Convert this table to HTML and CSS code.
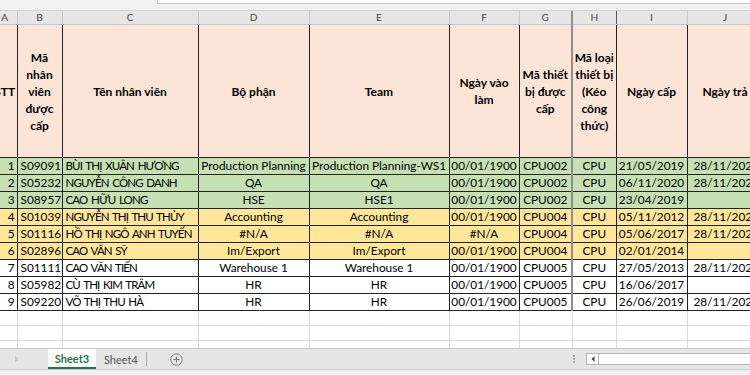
FILE: index.html
```html
<!DOCTYPE html>
<html lang="vi">
<head>
<meta charset="utf-8">
<title>Sheet3</title>
<link rel="stylesheet" href="styles.css">
</head>
<body>
<div class="app">
  <div class="topbar">
    <div class="namebox"></div>
    <div class="fxbox"></div>
  </div>
  <div class="gridwrap">
    <table class="sheet">
      <colgroup>
        <col class="w-a"><col class="w-b"><col class="w-c"><col class="w-d"><col class="w-e">
        <col class="w-f"><col class="w-g"><col class="w-h"><col class="w-i"><col class="w-j">
      </colgroup>
      <thead>
        <tr class="letters">
          <td>A</td><td>B</td><td>C</td><td>D</td><td>E</td><td>F</td><td class="cg">G</td><td class="ch">H</td><td>I</td><td>J</td>
        </tr>
        <tr class="head">
          <th class="c-a">STT</th>
          <th>Mã<br>nhân<br>viên<br>được<br>cấp</th>
          <th>Tên nhân viên</th>
          <th>Bộ phận</th>
          <th>Team</th>
          <th>Ngày vào<br>làm</th>
          <th class="cg">Mã thiết<br>bị được<br>cấp</th>
          <th>Mã loại<br>thiết bị<br>(Kéo<br>công<br>thức)</th>
          <th>Ngày cấp</th>
          <th>Ngày trả</th>
        </tr>
      </thead>
      <tbody>
        <tr class="data green"><td class="r">1</td><td>S09091</td><td class="nm">BÙI THỊ XUÂN HƯƠNG</td><td class="c">Production Planning</td><td class="c">Production Planning-WS1</td><td class="c">00/01/1900</td><td class="c cg">CPU002</td><td class="c">CPU</td><td class="c">21/05/2019</td><td class="j">28/11/2020</td></tr>
        <tr class="data green"><td class="r">2</td><td>S05232</td><td class="nm">NGUYỄN CÔNG DANH</td><td class="c">QA</td><td class="c">QA</td><td class="c">00/01/1900</td><td class="c cg">CPU002</td><td class="c">CPU</td><td class="c">06/11/2020</td><td class="j">28/11/2020</td></tr>
        <tr class="data green"><td class="r">3</td><td>S08957</td><td class="nm">CAO HỮU LONG</td><td class="c">HSE</td><td class="c">HSE1</td><td class="c">00/01/1900</td><td class="c cg">CPU002</td><td class="c">CPU</td><td class="c">23/04/2019</td><td class="j"></td></tr>
        <tr class="data yellow"><td class="r">4</td><td>S01039</td><td class="nm">NGUYỄN THỊ THU THỦY</td><td class="c">Accounting</td><td class="c">Accounting</td><td class="c">00/01/1900</td><td class="c cg">CPU004</td><td class="c">CPU</td><td class="c">05/11/2012</td><td class="j">28/11/2020</td></tr>
        <tr class="data yellow"><td class="r">5</td><td>S01116</td><td class="nm">HỒ THỊ NGÔ ANH TUYẾN</td><td class="c">#N/A</td><td class="c">#N/A</td><td class="c">#N/A</td><td class="c cg">CPU004</td><td class="c">CPU</td><td class="c">05/06/2017</td><td class="j">28/11/2020</td></tr>
        <tr class="data yellow"><td class="r">6</td><td>S02896</td><td class="nm">CAO VĂN SỸ</td><td class="c">Im/Export</td><td class="c">Im/Export</td><td class="c">00/01/1900</td><td class="c cg">CPU004</td><td class="c">CPU</td><td class="c">02/01/2014</td><td class="j"></td></tr>
        <tr class="data"><td class="r">7</td><td>S01111</td><td class="nm">CAO VĂN TIẾN</td><td class="c">Warehouse 1</td><td class="c">Warehouse 1</td><td class="c">00/01/1900</td><td class="c cg">CPU005</td><td class="c">CPU</td><td class="c">27/05/2013</td><td class="j">28/11/2020</td></tr>
        <tr class="data"><td class="r">8</td><td>S05982</td><td class="nm">CÙ THỊ KIM TRÂM</td><td class="c">HR</td><td class="c">HR</td><td class="c">00/01/1900</td><td class="c cg">CPU005</td><td class="c">CPU</td><td class="c">16/06/2017</td><td class="j"></td></tr>
        <tr class="data"><td class="r">9</td><td>S09220</td><td class="nm">VÕ THỊ THU HÀ</td><td class="c">HR</td><td class="c">HR</td><td class="c">00/01/1900</td><td class="c cg">CPU005</td><td class="c">CPU</td><td class="c">26/06/2019</td><td class="j">28/11/2020</td></tr>
        <tr class="empty"><td></td><td></td><td></td><td></td><td></td><td></td><td></td><td></td><td></td><td></td></tr>
        <tr class="empty"><td></td><td></td><td></td><td></td><td></td><td></td><td></td><td></td><td></td><td></td></tr>
        <tr class="empty"><td></td><td></td><td></td><td></td><td></td><td></td><td></td><td></td><td></td><td></td></tr>
      </tbody>
    </table>
  </div>
  <div class="tabbar">
    <div class="nav">
      <svg width="6" height="8" viewBox="0 0 6 8"><path d="M1 0.5 L5 4 L1 7.5 Z" fill="#C9C9C9"/></svg>
    </div>
    <div class="tab active">Sheet3</div>
    <div class="tab">Sheet4</div>
    <div class="tabsep"></div>
    <div class="add">
      <svg width="13" height="13" viewBox="0 0 13 13"><circle cx="6.5" cy="6.5" r="5.7" fill="none" stroke="#7A7A7A" stroke-width="1"/><path d="M6.5 3.5 V9.5 M3.5 6.5 H9.5" stroke="#7A7A7A" stroke-width="1.1"/></svg>
    </div>
    <div class="rightgroup">
      <div class="splitter"><span></span><span></span><span></span></div>
      <div class="hscroll">
        <div class="arrow">
          <svg width="4" height="6" viewBox="0 0 4 6"><path d="M3.5 0 L0.5 3 L3.5 6 Z" fill="#444"/></svg>
        </div>
      </div>
    </div>
  </div>
  <div class="status"></div>
</div>
</body>
</html>
```
FILE: styles.css
```css
html, body {
  margin: 0;
  padding: 0;
  background: #fff;
}

.app {
  width: 750px;
  height: 375px;
  display: flex;
  flex-direction: column;
  overflow: hidden;
  font-family: Lato, "Liberation Sans", sans-serif;
}

/* top formula strip */
.topbar {
  height: 11px;
  flex: none;
  display: flex;
  align-items: flex-start;
  background: #F1F1F1;
  border-bottom: 1px solid #D4D4D4;
  box-sizing: border-box;
}
.namebox {
  width: 157px;
}
.fxbox {
  flex: 1;
  height: 4px;
  background: #fff;
  border-left: 1px solid #C6C6C6;
  border-bottom: 1px solid #C6C6C6;
  box-sizing: border-box;
}

/* grid */
.gridwrap {
  flex: 1;
  overflow: hidden;
  background: #fff;
}
.sheet {
  border-collapse: collapse;
  table-layout: fixed;
  width: 770px;
  margin-left: -7px;
  font-size: 11.8px;
  color: #000;
}
.w-a { width: 24px; }
.w-b { width: 45px; }
.w-c { width: 136px; }
.w-d { width: 111px; }
.w-e { width: 140px; }
.w-f { width: 70px; }
.w-g { width: 53px; }
.w-h { width: 44px; }
.w-i { width: 71px; }
.w-j { width: 76px; }

.sheet td, .sheet th {
  padding: 0 3px;
  white-space: nowrap;
  overflow: hidden;
}

.letters td {
  height: 13px;
  padding: 0;
  background: #E6E6E6;
  color: #444;
  font-size: 10px;
  text-align: center;
  line-height: 13px;
  border-right: 1px solid #C8C8C8;
  border-bottom: 1px solid #C8C8C8;
}
.letters td.cg { border-right: 2px solid #8E8E8E; }
.letters td.ch { border-right: 1px solid #555; color: #4B3B5A; }

.head th {
  height: 132px;
  padding: 0;
  background: #FCE4D6;
  font-weight: 700;
  font-size: 12px;
  line-height: 17px;
  text-align: center;
  vertical-align: middle;
  white-space: nowrap;
  border-right: 1px solid #222;
  border-bottom: 1px solid #222;
}
.head th.c-a {
  overflow: visible;
}

.data td {
  height: 16px;
  line-height: 16px;
  border-right: 1px solid #222;
  border-bottom: 1px solid #222;
  vertical-align: middle;
}
.sheet .cg { border-right: 2px solid #8E8E8E; }
.data td.r { text-align: right; padding-right: 2px; }
.data td.c { text-align: center; padding: 0 1px; }
.data td.j { padding-left: 6px; }
.data td.nm { font-size: 11.5px; letter-spacing: -0.85px; word-spacing: 1.5px; }

.green td { background: #C6E0B4; }
.yellow td { background: #FFE699; }

.empty td {
  height: 14px;
  border-right: 1px solid #DADADA;
  border-bottom: 1px solid #DADADA;
}

/* sheet tabs */
.tabbar {
  height: 21px;
  flex: none;
  display: flex;
  align-items: stretch;
  background: #E6E6E6;
  border-top: 1px solid #C8C8C8;
  box-sizing: border-box;
  font-size: 11px;
}
.nav {
  width: 48px;
  display: flex;
  align-items: center;
  padding-left: 14px;
  box-sizing: border-box;
}
.tab {
  display: flex;
  align-items: center;
  justify-content: center;
  padding: 0 8px;
  color: #555;
}
.tab.active {
  width: 48px;
  padding: 0;
  box-sizing: border-box;
  background: #fff;
  color: #217346;
  font-weight: 700;
  border-bottom: 2px solid #217346;
}
.tabsep {
  width: 1px;
  margin: 3px 0 3px 0;
  background: #ABABAB;
}
.add {
  display: flex;
  align-items: center;
  margin-left: 23px;
}
.rightgroup {
  margin-left: auto;
  width: 178px;
  display: flex;
  align-items: center;
  gap: 11px;
}
.splitter {
  width: 3px;
  display: flex;
  flex-direction: column;
  gap: 1px;
  align-items: center;
}
.splitter span {
  width: 2px;
  height: 2px;
  background: #A8A8A8;
}
.hscroll {
  flex: 1;
  height: 12px;
  background: #fff;
  border: 1px solid #B4B4B4;
  border-right: none;
  box-sizing: border-box;
  display: flex;
}
.arrow {
  width: 11px;
  border-right: 1px solid #B4B4B4;
  display: flex;
  align-items: center;
  justify-content: center;
}

.status {
  height: 6px;
  flex: none;
  background: #F0F0F0;
  border-top: 1px solid #C8C8C8;
  box-sizing: border-box;
}
```
